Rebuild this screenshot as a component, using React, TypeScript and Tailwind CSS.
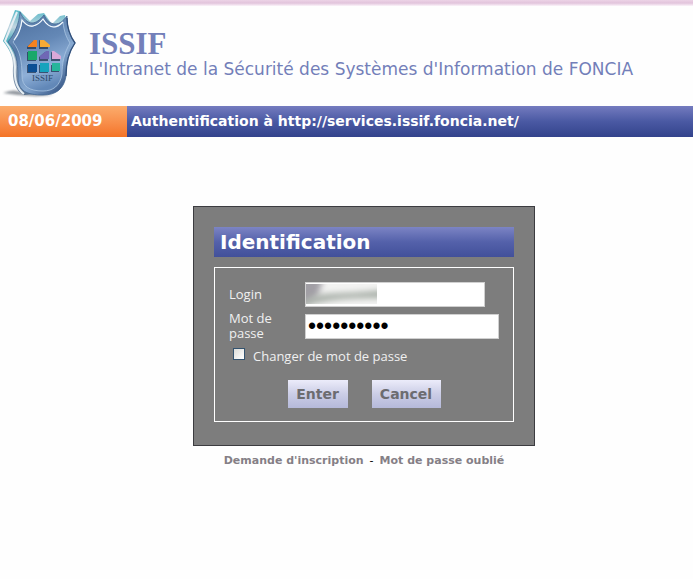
const links = [
  { label: "Demande d'inscription", href: '#inscription' },
  { label: 'Mot de passe oublié', href: '#oubli' },
]

function Logo() {
  return (
    <svg viewBox="0 8 78 92" className="w-[78px] h-[92px] shrink-0" role="img" aria-label="Logo">
      <defs>
        <linearGradient id="rim" x1="0" y1="0" x2="0.8" y2="1">
          <stop offset="0" stopColor="#86a9cb" />
          <stop offset="0.35" stopColor="#5478a6" />
          <stop offset="0.7" stopColor="#86a8d0" />
          <stop offset="1" stopColor="#2f4f80" />
        </linearGradient>
        <linearGradient id="side" x1="0" y1="0" x2="0" y2="1">
          <stop offset="0" stopColor="#58b9c8" />
          <stop offset="0.2" stopColor="#c3d5e0" />
          <stop offset="0.38" stopColor="#3fa9b8" />
          <stop offset="0.6" stopColor="#aebccb" />
          <stop offset="1" stopColor="#56708f" />
        </linearGradient>
        <linearGradient id="face" x1="0.1" y1="0" x2="0.4" y2="1">
          <stop offset="0" stopColor="#5073a2" />
          <stop offset="0.4" stopColor="#6488b6" />
          <stop offset="0.75" stopColor="#8fb0d8" />
          <stop offset="1" stopColor="#6288b8" />
        </linearGradient>
        <filter id="soft" x="-20%" y="-50%" width="140%" height="200%">
          <feGaussianBlur stdDeviation="1.2" />
        </filter>
      </defs>
      <path d="M3 93 Q14 88 24 93 L54 95 Q30 98 3 93Z" fill="#6f7780" opacity="0.75" filter="url(#soft)" />
      {/* Thickness of the shield, seen from the left */}
      <path d="M15 10 L3 41 C10 50 13 57 13 66 C12 80 15 91 24 95 L48 93 L66 20 L65 15 L60 16 L52 24 L44 13 L38 14 L30 21 L20 11Z" fill="url(#side)" />
      <path d="M17 12 L5 41 C12 50 15 58 15 67 C14 80 17 89 24 94" fill="none" stroke="#e6eef3" strokeWidth="2" />
      <path d="M20 12 C23 19 28 23 32 23 C36 23 40 20 44 15 C47 21 51 24 55 24 C60 24 63 21 67 16 C67 28 70 36 75 43 C68 53 66 64 66 76 C64 89 56 95 43 95 C27 95 18 91 18 78 C18 61 16 51 8 42 C15 33 19 24 20 12Z" fill="url(#rim)" stroke="#416690" strokeWidth="0.8" />
      <path d="M22 20 C25 24 29 27 33 26 C37 25 40 23 43 19 C46 24 50 27 54 27 C58 27 60 25 63 22 C64 31 66 37 70 43 C64 53 62 64 62 74 C60 86 53 91 43 91 C29 91 22 86 22 76 C22 61 20 51 13 42 C18 36 21 29 22 20Z" fill="url(#face)" stroke="#a9c5e2" strokeWidth="0.8" />
      <path d="M14 40 C18 35 21 28 22 20 C25 24 29 27 33 26 C37 25 40 23 43 19 C46 24 50 27 54 27 C58 27 60 25 63 22" fill="none" stroke="#f4f9fd" strokeWidth="1.2" />
      <path d="M67 18 C67 28 70 36 75 43 C68 53 66 64 66 76" fill="none" stroke="#31507c" strokeWidth="1.3" />
      <g fill="#223552" opacity="0.75" transform="translate(-1 1)">
        <path d="M28 46 L34 40 H37 V48 H28Z M40 39 L49 44 V48 H40Z M28 51 H37 V60 H28Z M40 60 L40 56 L46 51 H49 V60Z M52 51 L61 56 V60 H52Z M28 64 H37 V72 H28Z M40 64 H49 V72 H40Z M52 64 H60 V71 H52Z" />
      </g>
      <path d="M28 46 L34 40 H37 V47 H28Z" fill="#f58220" />
      <path d="M40 40 L44 40 L50 45 V47 H40Z" fill="#f6aa35" />
      <path d="M28 51 H37 V60 H28Z" fill="#18a86a" />
      <path d="M40 59 V56 L46 51 H49 V59Z" fill="#6f68b5" />
      <path d="M52 51 H54 L61 56 V59 H52Z" fill="#d9a8d8" />
      <path d="M28 64 H37 V72 H28Z" fill="#0c4f94" />
      <path d="M40 63 H49 V72 H40Z" fill="#16a3bd" />
      <path d="M52 63 H60 V71 H52Z" fill="#25b59b" />
      <text x="32" y="81" fontSize="9" fontFamily="'Liberation Serif', serif" fill="#2f4a6a">
        ISSIF
      </text>
    </svg>
  )
}

function Header() {
  return (
    <header>
      <div className="h-[6px] bg-linear-to-b from-[#ecd3e6] via-[#e2c4dc] to-[#fbf4fa]" />
      <div className="flex h-[100px] pt-[2px]">
        <Logo />
        <div className="pl-[11px] pt-[20px] text-[#737fb9]">
          <h1 className="font-['Liberation_Serif',serif] text-[31px] leading-[32px] font-bold">ISSIF</h1>
          <p className="text-[17px] leading-[18px] whitespace-nowrap">
            L'Intranet de la Sécurité des Systèmes d'Information de FONCIA
          </p>
        </div>
      </div>
      <div className="flex h-[31px] items-center font-bold text-white whitespace-nowrap">
        <div className="flex h-full w-[127px] items-center bg-linear-to-b from-[#fbac6c] to-[#f47325] pl-2 text-[15px]">
          08/06/2009
        </div>
        <div className="flex h-full flex-1 items-center bg-linear-to-b from-[#747bbf] via-[#4a59a3] to-[#33438c] pl-1 text-[14px]">
          Authentification à http://services.issif.foncia.net/
        </div>
      </div>
    </header>
  )
}

function LoginForm() {
  const button =
    'h-7 bg-linear-to-b from-[#ececfa] via-[#cbcde6] to-[#b5b9da] text-[14px] font-bold text-[#6c6c70]'
  const field = 'h-[25px] border border-[#d0d0d0] bg-white px-[2px] text-black'

  return (
    <form
      className="w-[342px] border border-[#3c3c40] bg-[#7d7d7d] px-5 pt-5 pb-[23px]"
      onSubmit={(e) => e.preventDefault()}
    >
      <h2 className="h-[30px] bg-linear-to-b from-[#7c84c4] via-[#5461aa] to-[#42509a] pl-[6px] text-[20px] leading-[30px] font-bold text-white">
        Identification
      </h2>
      <div className="mt-[10px] border border-white px-[14px] pt-[14px] pb-[13px] font-['Open_Sans',sans-serif] text-[13px] leading-[15px] text-[#f0f0f0]">
        <div className="flex h-[25px] items-center">
          <label htmlFor="login" className="w-[76px]">Login</label>
          <div className="relative">
            <input id="login" type="text" className={`${field} block w-[180px] text-[14px]`} />
            {/* Blurred user name */}
            <svg viewBox="0 0 71 20" className="pointer-events-none absolute top-[2px] left-px h-[20px] w-[71px]">
              <defs>
                <filter id="smudge" x="-20%" y="-80%" width="140%" height="260%">
                  <feGaussianBlur stdDeviation="3" />
                </filter>
              </defs>
              <rect width="71" height="20" fill="#f3f3f2" />
              <path d="M-10 -8 H18 L12 12 L-10 26Z" fill="#a19fa5" filter="url(#smudge)" />
              <path d="M-4 18 C16 6 30 12 78 6 L78 14 C44 14 30 14 -4 22Z" fill="#a3aaa3" filter="url(#smudge)" />
            </svg>
          </div>
        </div>
        <div className="mt-[4px] flex items-center">
          <label htmlFor="password" className="w-[76px] pr-5">Mot de passe</label>
          <input
            id="password"
            type="password"
            defaultValue="motdepasse"
            className={`${field} w-[194px] font-['Liberation_Sans',sans-serif] text-[23px] leading-[23px]`}
          />
        </div>
        <div className="mt-[6px] flex h-[18px] items-center gap-2 pl-1">
          <input
            id="change"
            type="checkbox"
            className="mb-1 size-[12px] appearance-none border border-[#34536f] bg-linear-to-br from-[#dcdcd8] to-white"
          />
          <label htmlFor="change">Changer de mot de passe</label>
        </div>
        <div className="mt-[15px] flex justify-center gap-6 font-['DejaVu_Sans',sans-serif]">
          <button type="submit" className={`${button} w-[60px]`}>Enter</button>
          <button type="reset" className={`${button} w-[69px]`}>Cancel</button>
        </div>
      </div>
    </form>
  )
}

export default function App() {
  return (
    <div className="min-h-screen bg-[#fefefe] font-['DejaVu_Sans',sans-serif]">
      <Header />
      <main className="flex flex-col items-center pt-[69px] pl-[35px]">
        <LoginForm />
        <nav className="mt-[7px] text-[11px] leading-4 font-bold text-[#857f86]">
          <a href={links[0].href}>{links[0].label}</a>
          <span className="px-[6px] font-normal text-black">-</span>
          <a href={links[1].href}>{links[1].label}</a>
        </nav>
      </main>
    </div>
  )
}
